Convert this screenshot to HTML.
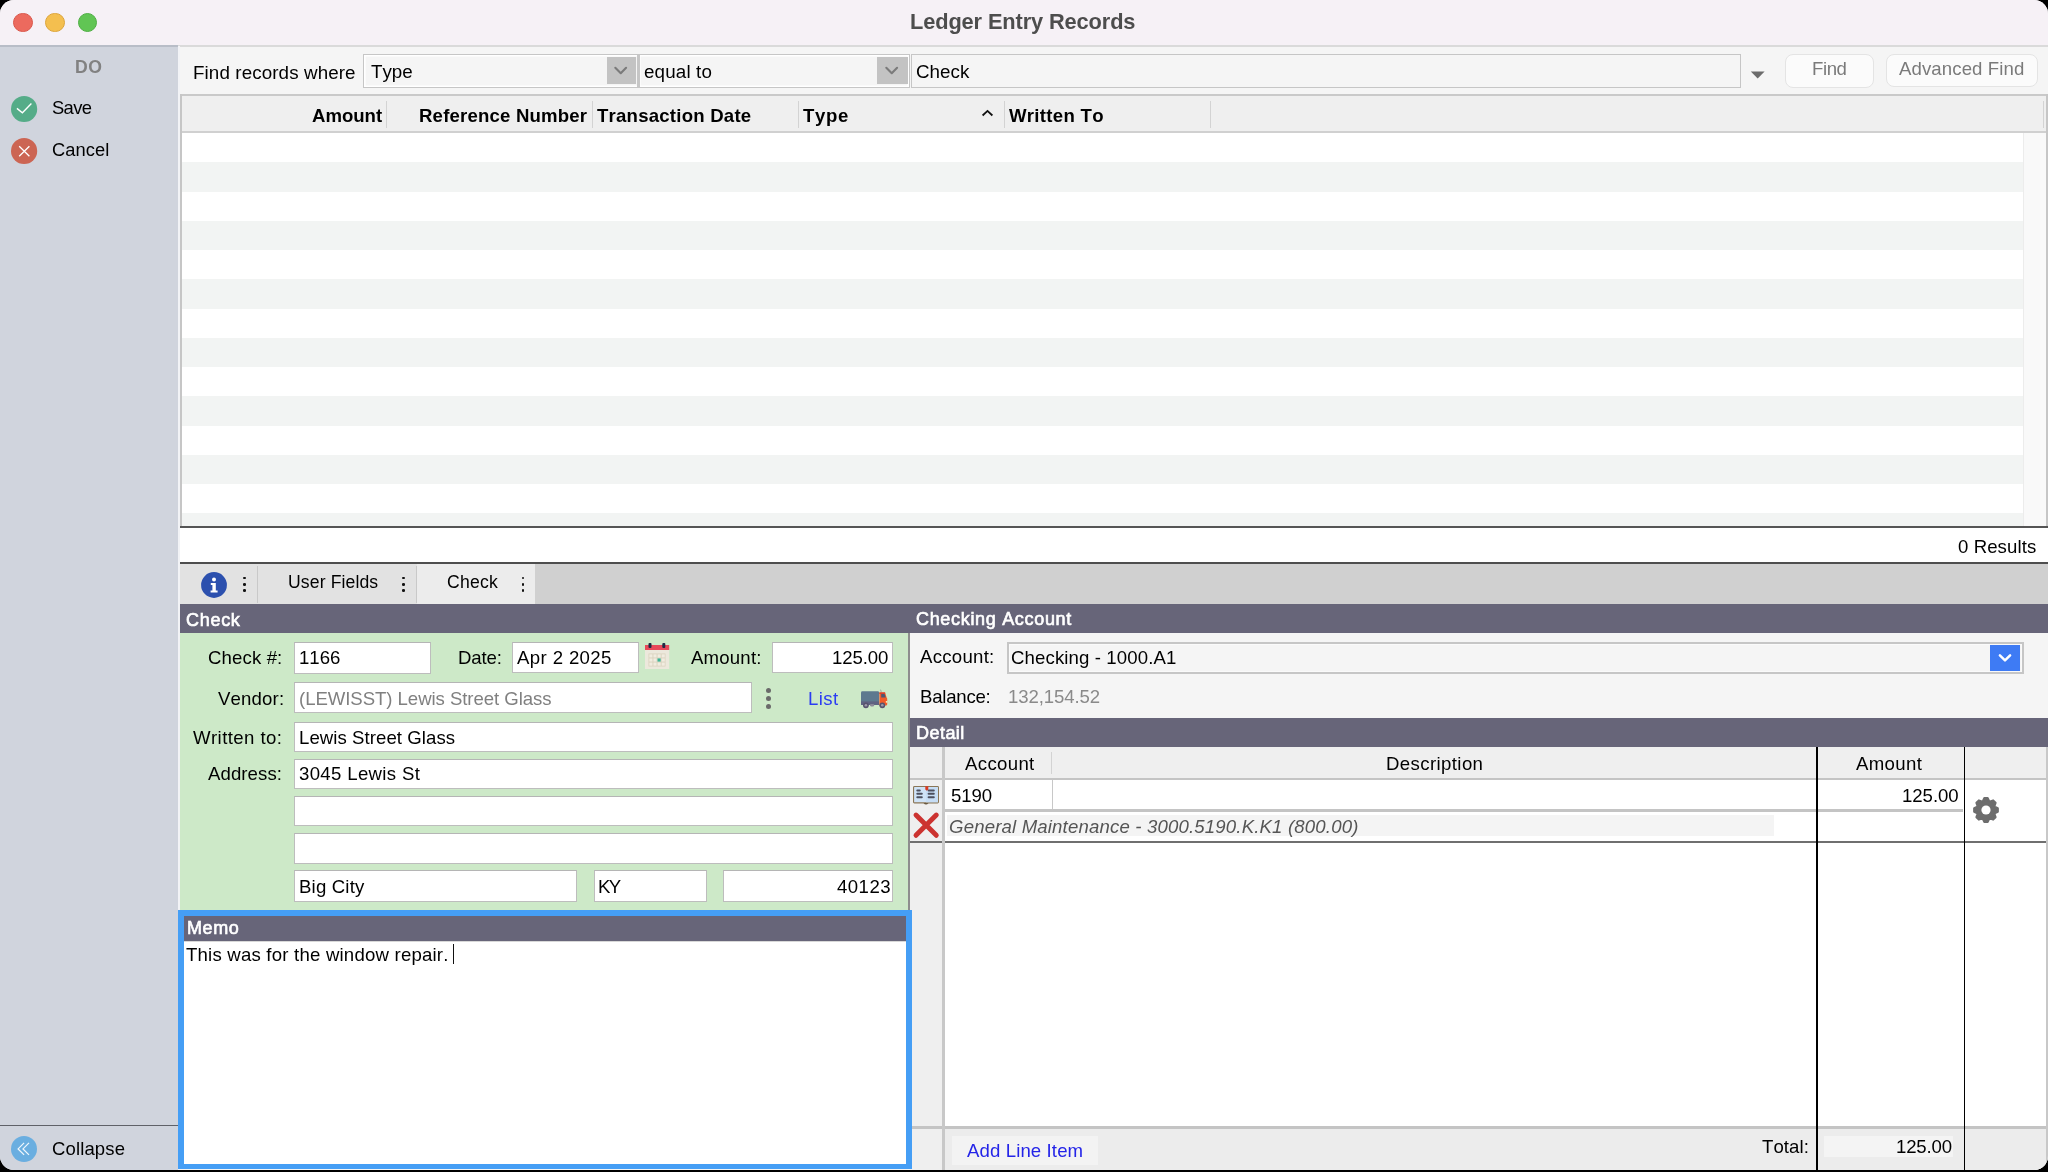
<!DOCTYPE html>
<html><head><meta charset="utf-8"><title>Ledger Entry Records</title>
<style>
html,body{margin:0;padding:0;}
body{width:2048px;height:1172px;background:#000;position:relative;overflow:hidden;font-family:"Liberation Sans",sans-serif;font-kerning:none;}
.a{position:absolute;}
.t{white-space:nowrap;will-change:transform;}
svg.a{overflow:visible;}
</style></head><body>
<div class="a" style="left:0;top:0;width:2048px;height:1170px;border-radius:14px;overflow:hidden;background:#f5f5f5;">
<div class="a" style="left:0px;top:0px;width:2048px;height:45px;background:#f6f1f6;"></div>
<div class="a" style="left:0px;top:45px;width:2048px;height:1.50px;background:#dadada;"></div>
<div class="a" style="left:13.05px;top:12.95px;width:19.50px;height:19.50px;background:#ec6a5e;border-radius:50%;box-sizing:border-box;border:0.8px solid #d9574b;"></div>
<div class="a" style="left:45.45px;top:12.95px;width:19.50px;height:19.50px;background:#f4bf4f;border-radius:50%;box-sizing:border-box;border:0.8px solid #dca43a;"></div>
<div class="a" style="left:77.85px;top:12.95px;width:19.50px;height:19.50px;background:#61c554;border-radius:50%;box-sizing:border-box;border:0.8px solid #4fae44;"></div>
<div class="a t" style="left:910.10px;top:8.87px;font-size:21.80px;line-height:26.16px;color:#4d4d4d;letter-spacing:-0.118px;font-weight:700;">Ledger Entry Records</div>
<div class="a" style="left:0px;top:46px;width:178px;height:1124px;background:#d0d4dd;"></div>
<div class="a" style="left:0px;top:45px;width:178px;height:1.50px;background:#b8bdc7;"></div>
<div class="a" style="left:178px;top:46px;width:2px;height:1124px;background:#f2f3f6;"></div>
<div class="a t" style="left:74.80px;top:56.54px;font-size:17.60px;line-height:21.12px;color:#818181;letter-spacing:0.600px;font-weight:700;">DO</div>
<svg class="a" style="left:11.2px;top:95.7px" width="26" height="26" viewBox="0 0 26 26"><circle cx="13.1" cy="13" r="13.1" fill="#55ac88"/><path d="M5.9 12.4 L11.4 16.8 L20.4 7.5" stroke="#fff" stroke-width="1.35" fill="none"/></svg>
<div class="a t" style="left:52.40px;top:97.08px;font-size:18.40px;line-height:22.08px;color:#000;letter-spacing:-0.645px;">Save</div>
<svg class="a" style="left:11.2px;top:137.8px" width="26" height="26" viewBox="0 0 26 26"><circle cx="13.1" cy="13" r="13.1" fill="#cc6553"/><path d="M8.2 8.2 L18.4 18.2 M18.4 8.2 L8.2 18.2" stroke="#fff" stroke-width="1.3" fill="none"/></svg>
<div class="a t" style="left:52.40px;top:138.58px;font-size:18.30px;line-height:21.96px;color:#000;letter-spacing:0.106px;">Cancel</div>
<div class="a" style="left:0px;top:1124.50px;width:178px;height:1.30px;background:#5f6168;"></div>
<svg class="a" style="left:11.4px;top:1135.7px" width="26" height="26" viewBox="0 0 26 26"><circle cx="13" cy="13" r="13" fill="#6aaee0"/><path d="M13.1 6.9 L7.1 12.9 L13.1 18.9 M18 6.9 L12 12.9 L18 18.9" stroke="#eef6fc" stroke-width="1.25" fill="none"/></svg>
<div class="a t" style="left:51.90px;top:1138.49px;font-size:18.50px;line-height:22.20px;color:#000;letter-spacing:0.138px;">Collapse</div>
<div class="a" style="left:180px;top:46.50px;width:1868px;height:47.50px;background:#f5f5f5;"></div>
<div class="a t" style="left:192.90px;top:62.01px;font-size:18.80px;line-height:22.56px;color:#000;letter-spacing:0.105px;">Find records where</div>
<div class="a" style="left:363.20px;top:53.80px;width:276.40px;height:34.20px;background:#f5f5f5;box-sizing:border-box;border:1.6px solid #c6c6c6;box-shadow:inset 0 0 0 1.6px #fff;"></div>
<div class="a" style="left:606.60px;top:57.20px;width:29px;height:26.60px;background:#c3c3c3;"></div>
<svg class="a" style="left:614.10px;top:62px" width="14" height="14" viewBox="0 0 14 14"><path d="M1.3 5.8 L6.75 11.2 L12.1 5.8" stroke="#7b7b7b" stroke-width="2.1" stroke-linecap="round" stroke-linejoin="round" fill="none"/></svg>
<div class="a t" style="left:371.40px;top:60.71px;font-size:18.80px;line-height:22.56px;color:#000;letter-spacing:-0.019px;">Type</div>
<div class="a" style="left:638.20px;top:53.80px;width:272.10px;height:34.20px;background:#f5f5f5;box-sizing:border-box;border:1.6px solid #c6c6c6;box-shadow:inset 0 0 0 1.6px #fff;"></div>
<div class="a" style="left:877px;top:57.20px;width:30.80px;height:26.60px;background:#c3c3c3;"></div>
<svg class="a" style="left:885.40px;top:62px" width="14" height="14" viewBox="0 0 14 14"><path d="M1.3 5.8 L6.75 11.2 L12.1 5.8" stroke="#7b7b7b" stroke-width="2.1" stroke-linecap="round" stroke-linejoin="round" fill="none"/></svg>
<div class="a t" style="left:643.80px;top:60.71px;font-size:18.80px;line-height:22.56px;color:#000;letter-spacing:0.156px;">equal to</div>
<div class="a" style="left:637.30px;top:53.80px;width:3px;height:34.20px;background:#c6c6c6;"></div>
<div class="a" style="left:911.30px;top:53.50px;width:830.20px;height:34.50px;background:#f5f5f5;box-sizing:border-box;border:1.6px solid #c6c6c6;"></div>
<div class="a t" style="left:915.80px;top:60.71px;font-size:18.80px;line-height:22.56px;color:#000;letter-spacing:0.046px;">Check</div>
<svg class="a" style="left:1750px;top:70.5px" width="16" height="8" viewBox="0 0 16 8"><path d="M0.8 0.4 L14.6 0.4 L7.7 7.6 Z" fill="#6c6c6c"/></svg>
<div class="a" style="left:1784.60px;top:53.80px;width:89.60px;height:33.80px;background:#fbfbfb;box-sizing:border-box;border:1px solid #e4e4e4;border-radius:8px;"></div>
<div class="a t" style="left:1811.70px;top:57.80px;font-size:18.60px;line-height:22.32px;color:#7a7a7a;letter-spacing:-0.426px;">Find</div>
<div class="a" style="left:1886px;top:54px;width:152px;height:33.40px;background:#fbfbfb;box-sizing:border-box;border:1px solid #e4e4e4;border-radius:8px;"></div>
<div class="a t" style="left:1898.60px;top:57.90px;font-size:18.60px;line-height:22.32px;color:#7a7a7a;letter-spacing:0.102px;">Advanced Find</div>
<div class="a" style="left:180px;top:94px;width:1868px;height:2px;background:#c9c9c9;"></div>
<div class="a" style="left:180px;top:94px;width:2px;height:433px;background:#c6c6c6;"></div>
<div class="a" style="left:2046px;top:94px;width:2px;height:433px;background:#c6c6c6;"></div>
<div class="a" style="left:182px;top:96px;width:1864px;height:35.30px;background:#efefef;"></div>
<div class="a" style="left:182px;top:131.30px;width:1864px;height:1.70px;background:#d0d0d0;"></div>
<div class="a" style="left:386.30px;top:101px;width:1.20px;height:26.50px;background:#d3d3d3;"></div>
<div class="a" style="left:592.10px;top:101px;width:1.20px;height:26.50px;background:#d3d3d3;"></div>
<div class="a" style="left:798.20px;top:101px;width:1.20px;height:26.50px;background:#d3d3d3;"></div>
<div class="a" style="left:1003.70px;top:101px;width:1.20px;height:26.50px;background:#d3d3d3;"></div>
<div class="a" style="left:1209.80px;top:101px;width:1.20px;height:26.50px;background:#d3d3d3;"></div>
<div class="a" style="left:2043.30px;top:101px;width:1.20px;height:26.50px;background:#d3d3d3;"></div>
<div class="a t" style="left:311.80px;top:104.50px;font-size:18.60px;line-height:22.32px;color:#000;letter-spacing:-0.030px;font-weight:700;">Amount</div>
<div class="a t" style="left:418.70px;top:104.50px;font-size:18.60px;line-height:22.32px;color:#000;letter-spacing:0.181px;font-weight:700;">Reference Number</div>
<div class="a t" style="left:597.40px;top:104.50px;font-size:18.60px;line-height:22.32px;color:#000;letter-spacing:0.221px;font-weight:700;">Transaction Date</div>
<div class="a t" style="left:802.90px;top:104.50px;font-size:18.60px;line-height:22.32px;color:#000;letter-spacing:0.688px;font-weight:700;">Type</div>
<svg class="a" style="left:981px;top:108.5px" width="13" height="9" viewBox="0 0 13 9"><path d="M1.6 6.5 L6.5 1.9 L11.4 6.5" stroke="#111" stroke-width="1.8" fill="none"/></svg>
<div class="a t" style="left:1009.10px;top:104.50px;font-size:18.60px;line-height:22.32px;color:#000;letter-spacing:0.286px;font-weight:700;">Written To</div>
<div class="a" style="left:182px;top:133px;width:1840.50px;height:29.25px;background:#ffffff;"></div>
<div class="a" style="left:182px;top:162.25px;width:1840.50px;height:29.25px;background:#f2f4f3;"></div>
<div class="a" style="left:182px;top:191.50px;width:1840.50px;height:29.25px;background:#ffffff;"></div>
<div class="a" style="left:182px;top:220.75px;width:1840.50px;height:29.25px;background:#f2f4f3;"></div>
<div class="a" style="left:182px;top:250px;width:1840.50px;height:29.25px;background:#ffffff;"></div>
<div class="a" style="left:182px;top:279.25px;width:1840.50px;height:29.25px;background:#f2f4f3;"></div>
<div class="a" style="left:182px;top:308.50px;width:1840.50px;height:29.25px;background:#ffffff;"></div>
<div class="a" style="left:182px;top:337.75px;width:1840.50px;height:29.25px;background:#f2f4f3;"></div>
<div class="a" style="left:182px;top:367px;width:1840.50px;height:29.25px;background:#ffffff;"></div>
<div class="a" style="left:182px;top:396.25px;width:1840.50px;height:29.25px;background:#f2f4f3;"></div>
<div class="a" style="left:182px;top:425.50px;width:1840.50px;height:29.25px;background:#ffffff;"></div>
<div class="a" style="left:182px;top:454.75px;width:1840.50px;height:29.25px;background:#f2f4f3;"></div>
<div class="a" style="left:182px;top:484px;width:1840.50px;height:29.25px;background:#ffffff;"></div>
<div class="a" style="left:182px;top:513.25px;width:1840.50px;height:12.55px;background:#f2f4f3;"></div>
<div class="a" style="left:2022.50px;top:133px;width:23.50px;height:392.80px;background:#f9f9f9;"></div>
<div class="a" style="left:2022.50px;top:133px;width:1px;height:392.80px;background:#ececec;"></div>
<div class="a" style="left:180px;top:525.80px;width:1868px;height:1.80px;background:#555555;"></div>
<div class="a" style="left:180px;top:527.60px;width:1868px;height:34.40px;background:#ffffff;"></div>
<div class="a t" style="left:1958.40px;top:535.90px;font-size:18.60px;line-height:22.32px;color:#000;letter-spacing:0.084px;">0 Results</div>
<div class="a" style="left:180px;top:562px;width:1868px;height:2px;background:#4e4e4e;"></div>
<div class="a" style="left:180px;top:564px;width:1868px;height:40px;background:#d0d0d0;"></div>
<div class="a" style="left:180px;top:564px;width:355px;height:40px;background:#e2e2e2;"></div>
<div class="a" style="left:417px;top:564px;width:118px;height:40px;background:#ececec;"></div>
<div class="a" style="left:257px;top:566px;width:1.20px;height:37px;background:#c9c9c9;"></div>
<div class="a" style="left:416px;top:566px;width:1.20px;height:37px;background:#c9c9c9;"></div>
<svg class="a" style="left:201px;top:571.7px" width="26" height="26" viewBox="0 0 26 26"><circle cx="13" cy="13" r="12.9" fill="#2c50ae"/><circle cx="13" cy="7.6" r="2" fill="#fff"/><path d="M9.8 11 L14.8 11 L14.8 18.6 L16.6 18.6 L16.6 20.6 L9.6 20.6 L9.6 18.6 L11.4 18.6 L11.4 13 L9.8 13 Z" fill="#fff"/></svg>
<div class="a" style="left:243.40px;top:576.60px;width:2.60px;height:2.60px;background:#111;border-radius:50%;"></div>
<div class="a" style="left:243.40px;top:583px;width:2.60px;height:2.60px;background:#111;border-radius:50%;"></div>
<div class="a" style="left:243.40px;top:589.40px;width:2.60px;height:2.60px;background:#111;border-radius:50%;"></div>
<div class="a" style="left:402.40px;top:576.60px;width:2.60px;height:2.60px;background:#111;border-radius:50%;"></div>
<div class="a" style="left:402.40px;top:583px;width:2.60px;height:2.60px;background:#111;border-radius:50%;"></div>
<div class="a" style="left:402.40px;top:589.40px;width:2.60px;height:2.60px;background:#111;border-radius:50%;"></div>
<div class="a" style="left:521.70px;top:576.60px;width:2.60px;height:2.60px;background:#111;border-radius:50%;"></div>
<div class="a" style="left:521.70px;top:583px;width:2.60px;height:2.60px;background:#111;border-radius:50%;"></div>
<div class="a" style="left:521.70px;top:589.40px;width:2.60px;height:2.60px;background:#111;border-radius:50%;"></div>
<div class="a t" style="left:287.80px;top:571.84px;font-size:17.60px;line-height:21.12px;color:#000;letter-spacing:0.120px;">User Fields</div>
<div class="a t" style="left:446.80px;top:571.84px;font-size:17.60px;line-height:21.12px;color:#000;letter-spacing:0.247px;">Check</div>
<div class="a" style="left:180px;top:604.10px;width:1868px;height:29.50px;background:#676579;"></div>
<div class="a t" style="left:186.20px;top:609.66px;font-size:18px;line-height:21.60px;color:#fff;letter-spacing:0.713px;-webkit-text-stroke:0.65px #fff;">Check</div>
<div class="a t" style="left:916px;top:609.46px;font-size:18px;line-height:21.60px;color:#fff;letter-spacing:0.681px;-webkit-text-stroke:0.65px #fff;">Checking Account</div>
<div class="a" style="left:180px;top:633.40px;width:728px;height:276.60px;background:#cde9c8;"></div>
<div class="a" style="left:908px;top:633.40px;width:2px;height:278.60px;background:#8e8e8e;"></div>
<div class="a t" style="left:207.70px;top:647.20px;font-size:18.60px;line-height:22.32px;color:#000;letter-spacing:0.129px;">Check #:</div>
<div class="a" style="left:293.50px;top:642.10px;width:137.60px;height:31.70px;background:#fff;box-sizing:border-box;border:1px solid #bdbdbd;border-top-color:#b5b5b5;"></div>
<div class="a t" style="left:298.80px;top:647.20px;font-size:18.60px;line-height:22.32px;color:#000;">1166</div>
<div class="a t" style="left:457.80px;top:647.10px;font-size:18.60px;line-height:22.32px;color:#000;letter-spacing:-0.113px;">Date:</div>
<div class="a" style="left:512.10px;top:641.90px;width:126.50px;height:30.90px;background:#fff;box-sizing:border-box;border:1px solid #bdbdbd;border-top-color:#b5b5b5;"></div>
<div class="a t" style="left:517.40px;top:646.80px;font-size:18.60px;line-height:22.32px;color:#000;letter-spacing:0.382px;">Apr 2 2025</div>
<svg class="a" style="left:644.8px;top:643px" width="25" height="26" viewBox="0 0 25 26"><rect x="0" y="2" width="24.2" height="5" fill="#e8495a"/><rect x="0" y="7" width="24.2" height="19" fill="#ece8dc"/><rect x="3.5" y="10.5" width="17" height="13" fill="#d9d2bd"/><rect x="4.3" y="11.3" width="3.2" height="3.2" fill="#f1ece0"/><rect x="8.4" y="11.3" width="3.2" height="3.2" fill="#f1ece0"/><rect x="12.5" y="11.3" width="3.2" height="3.2" fill="#f1ece0"/><rect x="16.6" y="11.3" width="3.2" height="3.2" fill="#f1ece0"/><rect x="4.3" y="15.4" width="3.2" height="3.2" fill="#f1ece0"/><rect x="8.4" y="15.4" width="3.2" height="3.2" fill="#f1ece0"/><rect x="12.5" y="15.4" width="3.2" height="3.2" fill="#f1ece0"/><rect x="16.6" y="15.4" width="3.2" height="3.2" fill="#f1ece0"/><rect x="4.3" y="19.5" width="3.2" height="3.2" fill="#f1ece0"/><rect x="8.4" y="19.5" width="3.2" height="3.2" fill="#f1ece0"/><rect x="12.5" y="19.5" width="3.2" height="3.2" fill="#f1ece0"/><rect x="16.6" y="19.5" width="3.2" height="3.2" fill="#f1ece0"/><rect x="12.5" y="15.4" width="3.2" height="3.2" fill="#3db394"/><rect x="3.5" y="0" width="3" height="5" rx="1" fill="#1f2a44"/><rect x="17.3" y="0" width="3" height="5" rx="1" fill="#1f2a44"/></svg>
<div class="a t" style="left:691.40px;top:647.10px;font-size:18.60px;line-height:22.32px;color:#000;letter-spacing:0.197px;">Amount:</div>
<div class="a" style="left:772.20px;top:642.10px;width:120.90px;height:30.70px;background:#fff;box-sizing:border-box;border:1px solid #bdbdbd;border-top-color:#b5b5b5;"></div>
<div class="a t" style="left:831.90px;top:647.10px;font-size:18.60px;line-height:22.32px;color:#000;letter-spacing:-0.099px;">125.00</div>
<div class="a t" style="left:217.80px;top:687.90px;font-size:18.60px;line-height:22.32px;color:#000;letter-spacing:0.164px;">Vendor:</div>
<div class="a" style="left:293.50px;top:682.20px;width:458.40px;height:30.40px;background:#fff;box-sizing:border-box;border:1px solid #bdbdbd;border-top-color:#b5b5b5;"></div>
<div class="a t" style="left:298.70px;top:687.90px;font-size:18.60px;line-height:22.32px;color:#808080;letter-spacing:-0.060px;">(LEWISST) Lewis Street Glass</div>
<div class="a" style="left:765.90px;top:687.60px;width:5.20px;height:5.20px;background:#6a6a6a;border-radius:50%;"></div>
<div class="a" style="left:765.90px;top:695.80px;width:5.20px;height:5.20px;background:#6a6a6a;border-radius:50%;"></div>
<div class="a" style="left:765.90px;top:704px;width:5.20px;height:5.20px;background:#6a6a6a;border-radius:50%;"></div>
<div class="a t" style="left:808px;top:687.70px;font-size:18.60px;line-height:22.32px;color:#2b3cf2;letter-spacing:0.386px;">List</div>
<svg class="a" style="left:860px;top:688.5px" width="29" height="20" viewBox="0 0 29 20"><path d="M20.6 0.6 L21.4 3.6" stroke="#8a8f98" stroke-width="0.7"/><path d="M1 3.6 Q1 2.2 2.4 2.2 L17.7 2.2 Q19.1 2.2 19.1 3.6 L19.1 15.9 L1 15.9 Z" fill="#5d798f"/><rect x="1" y="12.4" width="18.1" height="3.5" fill="#5f6282"/><path d="M19.4 3.4 L25.1 3.4 L26.6 8.6 L27.2 9.6 L27.2 15.6 Q27.2 16.4 26.4 16.4 L19.4 16.4 Z" fill="#f15b29"/><rect x="19.4" y="3.4" width="5.7" height="1.6" fill="#d9402d"/><path d="M21.2 5 L24.6 5 L25.8 8.6 L21.2 8.6 Z" fill="#4d5673"/><circle cx="26.6" cy="12.8" r="0.9" fill="#fff6c8"/><rect x="10" y="15" width="4.2" height="2.4" rx="1.1" fill="#8a8898"/><circle cx="5.9" cy="16.3" r="2.9" fill="#57536e"/><circle cx="5.9" cy="16.3" r="1.3" fill="#9c99aa"/><circle cx="22.3" cy="16.3" r="2.9" fill="#57536e"/><circle cx="22.3" cy="16.3" r="1.3" fill="#9c99aa"/></svg>
<div class="a t" style="left:193.20px;top:726.50px;font-size:18.60px;line-height:22.32px;color:#000;letter-spacing:0.427px;">Written to:</div>
<div class="a" style="left:293.50px;top:721.60px;width:599.60px;height:30.60px;background:#fff;box-sizing:border-box;border:1px solid #bdbdbd;border-top-color:#b5b5b5;"></div>
<div class="a t" style="left:298.70px;top:726.50px;font-size:18.60px;line-height:22.32px;color:#000;letter-spacing:0.062px;">Lewis Street Glass</div>
<div class="a t" style="left:207.90px;top:763.40px;font-size:18.60px;line-height:22.32px;color:#000;letter-spacing:0.086px;">Address:</div>
<div class="a" style="left:293.50px;top:758.60px;width:599.60px;height:30.60px;background:#fff;box-sizing:border-box;border:1px solid #bdbdbd;border-top-color:#b5b5b5;"></div>
<div class="a t" style="left:298.70px;top:763.40px;font-size:18.60px;line-height:22.32px;color:#000;letter-spacing:0.338px;">3045 Lewis St</div>
<div class="a" style="left:293.50px;top:796px;width:599.60px;height:30.40px;background:#fff;box-sizing:border-box;border:1px solid #bdbdbd;border-top-color:#b5b5b5;"></div>
<div class="a" style="left:293.50px;top:833.40px;width:599.60px;height:30.60px;background:#fff;box-sizing:border-box;border:1px solid #bdbdbd;border-top-color:#b5b5b5;"></div>
<div class="a" style="left:293.50px;top:870.40px;width:283.50px;height:31.60px;background:#fff;box-sizing:border-box;border:1px solid #bdbdbd;border-top-color:#b5b5b5;"></div>
<div class="a t" style="left:298.70px;top:875.70px;font-size:18.60px;line-height:22.32px;color:#000;letter-spacing:0.175px;">Big City</div>
<div class="a" style="left:593.80px;top:870.40px;width:112.80px;height:31.60px;background:#fff;box-sizing:border-box;border:1px solid #bdbdbd;border-top-color:#b5b5b5;"></div>
<div class="a t" style="left:598.40px;top:875.70px;font-size:18.60px;line-height:22.32px;color:#000;letter-spacing:-1.612px;">KY</div>
<div class="a" style="left:723px;top:870.40px;width:170.10px;height:31.60px;background:#fff;box-sizing:border-box;border:1px solid #bdbdbd;border-top-color:#b5b5b5;"></div>
<div class="a t" style="left:836.70px;top:875.70px;font-size:18.60px;line-height:22.32px;color:#000;letter-spacing:0.468px;">40123</div>
<div class="a" style="left:910px;top:633.40px;width:1138px;height:84.60px;background:#f5f5f5;"></div>
<div class="a t" style="left:920.10px;top:646.40px;font-size:18.60px;line-height:22.32px;color:#000;letter-spacing:0.275px;">Account:</div>
<div class="a" style="left:1007.10px;top:642px;width:1016.70px;height:31.90px;background:#f5f5f5;box-sizing:border-box;border:2px solid #c6c6c6;box-shadow:inset 0 0 0 1px #fafafa;"></div>
<div class="a t" style="left:1011.40px;top:646.90px;font-size:18.60px;line-height:22.32px;color:#000;letter-spacing:0.120px;">Checking - 1000.A1</div>
<div class="a" style="left:1989.70px;top:644.90px;width:30.50px;height:25.80px;background:#3e7bf4;"></div>
<svg class="a" style="left:1998px;top:651px" width="14" height="14" viewBox="0 0 14 14"><path d="M1.9 4.4 L7 9.4 L12.1 4.4" stroke="#fff" stroke-width="2.5" stroke-linecap="round" stroke-linejoin="round" fill="none"/></svg>
<div class="a t" style="left:920.10px;top:685.60px;font-size:18.60px;line-height:22.32px;color:#000;letter-spacing:-0.227px;">Balance:</div>
<div class="a t" style="left:1008.10px;top:685.90px;font-size:18.60px;line-height:22.32px;color:#8a8a8a;letter-spacing:-0.099px;">132,154.52</div>
<div class="a" style="left:910px;top:718.10px;width:1138px;height:28.70px;background:#676579;"></div>
<div class="a t" style="left:916px;top:723.06px;font-size:18px;line-height:21.60px;color:#fff;letter-spacing:0.455px;-webkit-text-stroke:0.65px #fff;">Detail</div>
<div class="a" style="left:910px;top:746.80px;width:1138px;height:423.20px;background:#ffffff;"></div>
<div class="a" style="left:910px;top:746.80px;width:32.20px;height:423.20px;background:#efefef;"></div>
<div class="a" style="left:942.20px;top:746.80px;width:2.80px;height:423.20px;background:#c8c8c8;"></div>
<div class="a" style="left:945px;top:746.80px;width:1101px;height:31.20px;background:#efefef;"></div>
<div class="a" style="left:910px;top:778px;width:1136px;height:2px;background:#c4c4c4;"></div>
<div class="a" style="left:2046px;top:746.80px;width:2px;height:423.20px;background:#c8c8c8;"></div>
<div class="a t" style="left:964.90px;top:752.80px;font-size:18.60px;line-height:22.32px;color:#000;letter-spacing:0.350px;">Account</div>
<div class="a" style="left:1051px;top:752px;width:1.20px;height:22px;background:#d3d3d3;"></div>
<div class="a t" style="left:1386.40px;top:753px;font-size:18.60px;line-height:22.32px;color:#000;letter-spacing:0.396px;">Description</div>
<div class="a t" style="left:1856.40px;top:752.70px;font-size:18.60px;line-height:22.32px;color:#000;letter-spacing:0.361px;">Amount</div>
<div class="a t" style="left:950.60px;top:784.90px;font-size:18.60px;line-height:22.32px;color:#000;letter-spacing:-0.095px;">5190</div>
<div class="a" style="left:1051.50px;top:780px;width:1.50px;height:30px;background:#c8c8c8;"></div>
<div class="a" style="left:945px;top:809.20px;width:1018px;height:2.60px;background:#c4c4c4;"></div>
<div class="a t" style="left:1902.20px;top:784.80px;font-size:18.60px;line-height:22.32px;color:#000;letter-spacing:-0.039px;">125.00</div>
<div class="a" style="left:947px;top:815.30px;width:827px;height:21px;background:#f4f4f4;"></div>
<div class="a t" style="left:949.10px;top:815.60px;font-size:18.60px;line-height:22.32px;color:#555;letter-spacing:0.165px;font-style:italic;">General Maintenance - 3000.5190.K.K1 (800.00)</div>
<div class="a" style="left:910px;top:840.60px;width:1136px;height:2.10px;background:#6f6f6f;"></div>
<div class="a" style="left:942.20px;top:746.80px;width:2.80px;height:423.20px;background:#c8c8c8;"></div>
<div class="a" style="left:1816.30px;top:746.80px;width:1.60px;height:423.20px;background:#000;"></div>
<div class="a" style="left:1963.60px;top:746.80px;width:1.60px;height:423.20px;background:#000;"></div>
<svg class="a" style="left:913px;top:786px" width="26" height="20" viewBox="0 0 26 20"><rect x="0.55" y="0.55" width="24.9" height="16.3" rx="0.9" fill="#cfe3f7" stroke="#8a7656" stroke-width="1.1"/><rect x="13" y="1.1" width="12" height="15.2" fill="#c6ddf5"/><path d="M4.3 4.4 L6.8 4.4 M4.3 7.8 L8.8 7.8 M4.3 11.2 L8.8 11.2 M15.6 4.4 L20.8 4.4 M15.6 7.8 L20.8 7.8 M15.6 11.2 L20.8 11.2" stroke="#4c4f5e" stroke-width="2" stroke-linecap="round"/><path d="M12.3 0.3 L15.3 0.3 L15.3 3.6 L13.8 4.8 L12.3 3.6 Z" fill="#d93a22"/><path d="M10.5 16.9 Q13 20.3 15.5 16.9 Z" fill="#6a5a40"/></svg>
<svg class="a" style="left:912px;top:811px" width="28" height="28" viewBox="0 0 28 28"><path d="M4.0 4.0 L24.3 24.3 M24.3 4.0 L4.0 24.3" stroke="#cc3330" stroke-width="4.9" stroke-linecap="round"/></svg>
<svg class="a" style="left:1972.2px;top:796.2px" width="28" height="28" viewBox="-14 -14 28 28"><path d="M-3.70 -7.54 L-1.70 -11.78 L1.70 -11.78 L3.70 -7.54 L2.72 -7.95 L7.13 -9.53 L9.53 -7.13 L7.95 -2.72 L7.54 -3.70 L11.78 -1.70 L11.78 1.70 L7.54 3.70 L7.95 2.72 L9.53 7.13 L7.13 9.53 L2.72 7.95 L3.70 7.54 L1.70 11.78 L-1.70 11.78 L-3.70 7.54 L-2.72 7.95 L-7.13 9.53 L-9.53 7.13 L-7.95 2.72 L-7.54 3.70 L-11.78 1.70 L-11.78 -1.70 L-7.54 -3.70 L-7.95 -2.72 L-9.53 -7.13 L-7.13 -9.53 L-2.72 -7.95 Z" fill="#6d6d6d" stroke="#6d6d6d" stroke-width="2.2" stroke-linejoin="round"/><circle r="8.9" fill="#6d6d6d"/><circle r="4.6" fill="#fff"/></svg>
<div class="a" style="left:910px;top:1126.30px;width:1136px;height:2.90px;background:#c4c4c4;"></div>
<div class="a" style="left:945px;top:1129.20px;width:1101px;height:40.80px;background:#ececec;"></div>
<div class="a" style="left:942.20px;top:1126.30px;width:2.80px;height:43.70px;background:#c8c8c8;"></div>
<div class="a" style="left:1816.30px;top:1126px;width:1.60px;height:44px;background:#000;"></div>
<div class="a" style="left:1963.60px;top:1126px;width:1.60px;height:44px;background:#000;"></div>
<div class="a" style="left:951.70px;top:1136px;width:146px;height:28.50px;background:#f3f3f3;"></div>
<div class="a t" style="left:966.70px;top:1139.70px;font-size:18.60px;line-height:22.32px;color:#2424e8;letter-spacing:0.112px;">Add Line Item</div>
<div class="a t" style="left:1762px;top:1136.30px;font-size:18.60px;line-height:22.32px;color:#000;letter-spacing:0.069px;">Total:</div>
<div class="a" style="left:1824.20px;top:1136px;width:129.30px;height:20.80px;background:#f4f4f4;"></div>
<div class="a t" style="left:1895.80px;top:1136.30px;font-size:18.60px;line-height:22.32px;color:#000;letter-spacing:-0.159px;">125.00</div>
<div class="a" style="left:178px;top:909.80px;width:734px;height:259.70px;background:#459ef5;"></div>
<div class="a" style="left:184.10px;top:916px;width:721.90px;height:248px;background:#ffffff;"></div>
<div class="a" style="left:184.10px;top:916px;width:721.90px;height:25.20px;background:#676579;"></div>
<div class="a" style="left:184.10px;top:941.20px;width:721.90px;height:1px;background:#d8d8d8;"></div>
<div class="a t" style="left:186.90px;top:917.56px;font-size:18px;line-height:21.60px;color:#fff;letter-spacing:0.565px;-webkit-text-stroke:0.65px #fff;">Memo</div>
<div class="a t" style="left:185.60px;top:943.60px;font-size:18.60px;line-height:22.32px;color:#000;letter-spacing:0.205px;">This was for the window repair.</div>
<div class="a" style="left:452.50px;top:943.50px;width:1.50px;height:20.50px;background:#111;"></div>
</div>
</body></html>
